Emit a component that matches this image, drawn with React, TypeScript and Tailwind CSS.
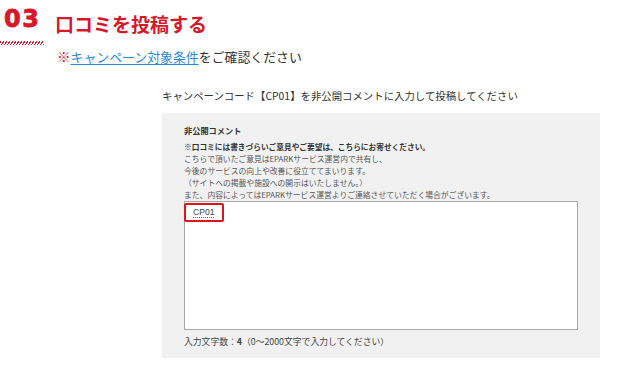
import React from 'react';

const jp = "font-['Noto_Sans_CJK_JP','Noto_Sans',sans-serif]";

const App = () => {
  return (
    <div className={`relative h-[375px] w-[637px] overflow-hidden bg-white text-[#333] ${jp}`}>
      {/* heading */}
      <div className="flex flex-row items-start">
        <div className="flex w-[55px] flex-col">
          <p className="mt-[7px] pl-[4px] font-['DejaVu_Sans',sans-serif] text-[24px] font-bold leading-[24px] tracking-[1.5px] text-[#d7182a] [-webkit-text-stroke:0.8px_#d7182a]">
            03
          </p>
          <div className="mt-[10px] h-[4px] w-[44px] bg-[repeating-linear-gradient(120deg,#d7182a_0px,#d7182a_1.2px,transparent_1.2px,transparent_2.6px)]" />
        </div>
        <div className="flex flex-col">
          <h2 className="mt-[14px] text-[19px] font-bold leading-[19px] text-[#d7182a]">
            口コミを投稿する
          </h2>
          <p className="mt-[15px] pl-[2px] text-[12.9px] leading-[16px] text-[#333]">
            <span className="text-[13.5px] font-bold text-[#d7182a]">※</span>
            <a className="cursor-pointer text-[#2a8ad8] underline underline-offset-2">
              キャンペーン対象条件
            </a>
            をご確認ください
          </p>
        </div>
      </div>

      {/* form */}
      <div className="ml-[162px] flex flex-col">
        <p className="mt-[23px] text-[10.4px] leading-[16px] text-[#333]">
          キャンペーンコード【CP01】を非公開コメントに入力して投稿してください
        </p>
        <div className="mt-[9px] flex h-[245px] w-[438px] flex-col bg-[#f1f1f1] px-[22px] pt-[11px]">
          <p className="text-[8.2px] font-bold leading-[12px] text-[#333]">非公開コメント</p>
          <div className="mt-[5px] flex flex-col text-[7.8px] leading-[12px] text-[#555]">
            <p className="text-[7.7px] font-bold text-[#333]">
              ※口コミには書きづらいご意見やご要望は、こちらにお寄せください。
            </p>
            <p>こちらで頂いたご意見はEPARKサービス運営内で共有し、</p>
            <p>今後のサービスの向上や改善に役立ててまいります。</p>
            <p>（サイトへの掲載や施設への開示はいたしません。）</p>
            <p>また、内容によってはEPARKサービス運営よりご連絡させていただく場合がございます。</p>
          </div>
          <div className="relative h-[129px] w-[394px] border border-[#a9a9a9] bg-white pl-[8px] pt-[4px]">
            <p className="font-['Liberation_Sans',sans-serif] text-[8.6px] leading-[12px] text-[#444]">
              <span className="underline decoration-[#e03030] decoration-dotted decoration-1 underline-offset-[2px]">
                CP01
              </span>
            </p>
            <div className="absolute left-[-1px] top-[1px] h-[19px] w-[40px] rounded-[2px] border-2 border-[#e0141e]" />
          </div>
          <p className="mt-[6px] text-[8.8px] leading-[12px] text-[#444]">
            入力文字数：<span className="font-bold">4</span>（0〜2000文字で入力してください）
          </p>
        </div>
      </div>
    </div>
  );
};

export default App;
